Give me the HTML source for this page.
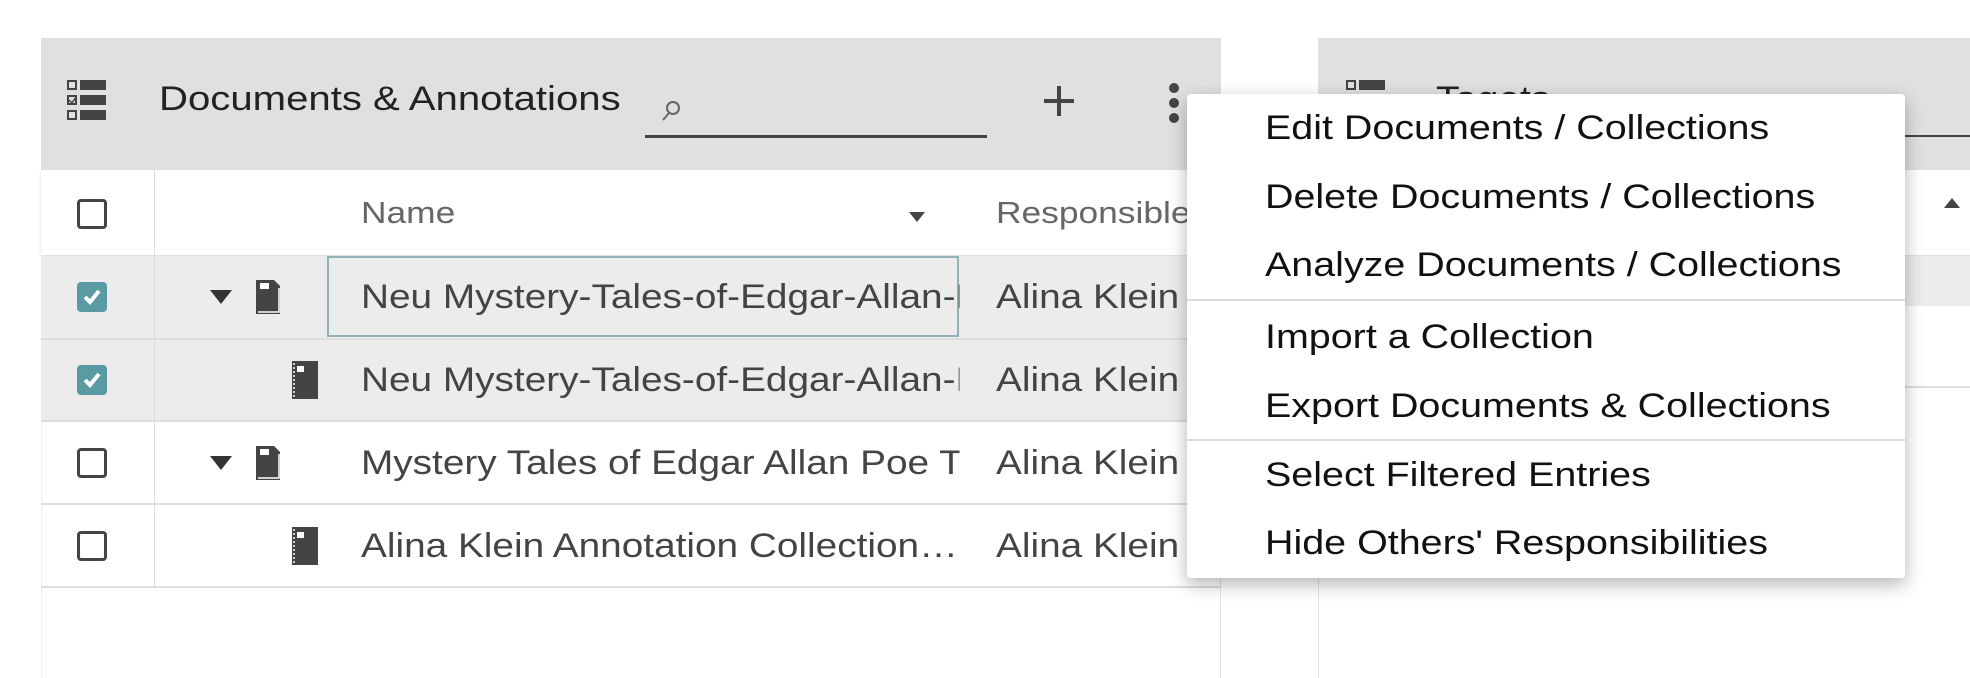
<!DOCTYPE html>
<html><head><meta charset="utf-8"><style>
*{margin:0;padding:0;box-sizing:border-box}
body{width:1970px;height:656px;background:#fff;position:relative;overflow:hidden;font-family:"Liberation Sans",sans-serif}
.a{position:absolute}
.t{position:absolute;white-space:nowrap;font-size:34px;color:#444;line-height:40px;transform:scaleX(1.14);transform-origin:0 0}
.cb{position:absolute;width:30px;height:30px;border:3px solid #444;border-radius:4px;background:#fff}
.cbc{position:absolute;width:30px;height:30px;border-radius:4px;background:#5a9aa3}
.mi{position:absolute;left:78px;font-size:34px;color:#111;white-space:nowrap;line-height:40px;transform:scaleX(1.16);transform-origin:0 0}
</style></head><body>
<div class="a" style="left:41px;top:38px;width:1180px;height:640px;border-right:1px solid #e4e4e4;border-left:1px solid #eee"></div>
<div class="a" style="left:41px;top:38px;width:1180px;height:132px;background:#e0e0e0"></div>
<svg class="a" style="left:67px;top:80px" width="42" height="42" viewBox="0 0 42 42">
<rect x="1" y="1" width="8" height="8" fill="none" stroke="#444" stroke-width="2"/><rect x="13" y="0" width="26" height="10" fill="#444"/>
<rect x="1" y="16" width="8" height="8" fill="none" stroke="#444" stroke-width="2"/><path d="M2 20l3 3 4-6" stroke="#444" stroke-width="1.5" fill="none"/><rect x="13" y="15" width="26" height="10" fill="#444"/>
<rect x="1" y="31" width="8" height="8" fill="none" stroke="#444" stroke-width="2"/><rect x="13" y="30" width="26" height="10" fill="#444"/>
</svg>
<div class="t" style="left:159px;top:79px;color:#222;transform:scaleX(1.18)">Documents &amp; Annotations</div>
<svg class="a" style="left:660px;top:98px" width="22" height="26" viewBox="0 0 22 26"><circle cx="13" cy="10" r="6" fill="none" stroke="#666" stroke-width="2"/><path d="M9 15l-6 7" stroke="#666" stroke-width="2"/></svg>
<div class="a" style="left:645px;top:135px;width:342px;height:3px;background:#444"></div>
<div class="a" style="left:1044px;top:99px;width:30px;height:4px;background:#444"></div>
<div class="a" style="left:1057px;top:86px;width:4px;height:30px;background:#444"></div>
<div class="a" style="left:1169px;top:83px;width:10px;height:10px;border-radius:5px;background:#444"></div>
<div class="a" style="left:1169px;top:98px;width:10px;height:10px;border-radius:5px;background:#444"></div>
<div class="a" style="left:1169px;top:113px;width:10px;height:10px;border-radius:5px;background:#444"></div>
<div class="a" style="left:41px;top:170px;width:1180px;height:85px;background:#fff;box-shadow:0 2px 3px rgba(0,0,0,.15)"></div>
<div class="a" style="left:154px;top:170px;width:1px;height:418px;background:#ddd"></div>
<div class="cb" style="left:77px;top:199px"></div>
<div class="t" style="left:361px;top:193px;color:#666;font-size:31px">Name</div>
<svg class="a" style="left:909px;top:212px" width="16" height="10"><path d="M0 0h16L8 10z" fill="#444"/></svg>
<div class="t" style="left:996px;top:193px;color:#666;font-size:31px">Responsible</div>
<div class="a" style="left:41px;top:256px;width:1180px;height:165px;background:#ececec"></div>
<div class="a" style="left:41px;top:338px;width:1180px;height:2px;background:#ddd"></div>
<div class="a" style="left:41px;top:420px;width:1180px;height:2px;background:#ddd"></div>
<div class="a" style="left:41px;top:503px;width:1180px;height:2px;background:#ddd"></div>
<div class="a" style="left:41px;top:586px;width:1180px;height:2px;background:#ddd"></div>
<div class="a" style="left:154px;top:256px;width:1px;height:332px;background:#ddd"></div>
<div class="a" style="left:327px;top:256px;width:632px;height:81px;border:2px solid #8fb3b8"></div>
<div class="cbc" style="left:77px;top:282px"></div><svg class="a" style="left:77px;top:282px" width="30" height="30"><path d="M8 15l5 5 9-11" stroke="#fff" stroke-width="4" fill="none"/></svg>
<div class="cbc" style="left:77px;top:365px"></div><svg class="a" style="left:77px;top:365px" width="30" height="30"><path d="M8 15l5 5 9-11" stroke="#fff" stroke-width="4" fill="none"/></svg>
<div class="cb" style="left:77px;top:448px"></div>
<div class="cb" style="left:77px;top:531px"></div>
<svg class="a" style="left:210px;top:290px" width="22" height="14"><path d="M0 0h22L11 14z" fill="#333"/></svg>
<svg class="a" style="left:210px;top:456px" width="22" height="14"><path d="M0 0h22L11 14z" fill="#333"/></svg>
<svg class="a" style="left:254px;top:278px" width="30" height="38" viewBox="0 0 30 38"><path d="M2 2h18l6 6v28H2z" fill="#444"/><rect x="6" y="5" width="9" height="6" fill="#fff"/><path d="M4 34h21V10" stroke="#fff" stroke-width="1.5" fill="none"/></svg>
<svg class="a" style="left:254px;top:444px" width="30" height="38" viewBox="0 0 30 38"><path d="M2 2h18l6 6v28H2z" fill="#444"/><rect x="6" y="5" width="9" height="6" fill="#fff"/><path d="M4 34h21V10" stroke="#fff" stroke-width="1.5" fill="none"/></svg>
<svg class="a" style="left:290px;top:360px" width="30" height="40" viewBox="0 0 30 40"><rect x="2" y="1" width="26" height="38" fill="#444"/><rect x="7" y="6" width="7" height="6" fill="#fff"/><path d="M4 3v34" stroke="#fff" stroke-width="1.5" stroke-dasharray="2 2"/></svg>
<svg class="a" style="left:290px;top:526px" width="30" height="40" viewBox="0 0 30 40"><rect x="2" y="1" width="26" height="38" fill="#444"/><rect x="7" y="6" width="7" height="6" fill="#fff"/><path d="M4 3v34" stroke="#fff" stroke-width="1.5" stroke-dasharray="2 2"/></svg>
<div class="t" style="left:361px;top:277px;width:525px;overflow:hidden">Neu Mystery-Tales-of-Edgar-Allan-Poe</div>
<div class="t" style="left:361px;top:360px;width:525px;overflow:hidden">Neu Mystery-Tales-of-Edgar-Allan-Poe</div>
<div class="t" style="left:361px;top:443px;width:525px;overflow:hidden">Mystery Tales of Edgar Allan Poe T</div>
<div class="t" style="left:361px;top:526px;width:530px;overflow:hidden">Alina Klein Annotation Collection…</div>
<div class="t" style="left:996px;top:277px;width:186px;overflow:hidden">Alina Klein</div>
<div class="t" style="left:996px;top:360px;width:186px;overflow:hidden">Alina Klein</div>
<div class="t" style="left:996px;top:443px;width:186px;overflow:hidden">Alina Klein</div>
<div class="t" style="left:996px;top:526px;width:186px;overflow:hidden">Alina Klein</div>
<div class="a" style="left:1318px;top:38px;width:700px;height:640px;border-left:1px solid #e4e4e4"></div>
<div class="a" style="left:1318px;top:38px;width:700px;height:132px;background:#e0e0e0"></div>
<svg class="a" style="left:1346px;top:80px" width="40" height="12"><rect x="1" y="1" width="8" height="8" fill="none" stroke="#444" stroke-width="2"/><rect x="13" y="0" width="26" height="10" fill="#444"/></svg>
<div class="t" style="left:1436px;top:79px;color:#222">Tagets</div>
<div class="a" style="left:1900px;top:135px;width:80px;height:2px;background:#444"></div>
<div class="a" style="left:1318px;top:170px;width:700px;height:85px;background:#fff;box-shadow:0 2px 3px rgba(0,0,0,.15)"></div>
<svg class="a" style="left:1944px;top:198px" width="16" height="10"><path d="M0 10h16L8 0z" fill="#444"/></svg>
<div class="a" style="left:1318px;top:256px;width:700px;height:50px;background:#ececec"></div>
<div class="a" style="left:1318px;top:386px;width:700px;height:2px;background:#ddd"></div>
<div class="a" style="left:1187px;top:94px;width:718px;height:484px;background:#fff;border-radius:4px;box-shadow:0 6px 18px rgba(0,0,0,.3)">
<div class="mi" style="top:14px">Edit Documents / Collections</div>
<div class="mi" style="top:83px">Delete Documents / Collections</div>
<div class="mi" style="top:151px">Analyze Documents / Collections</div>
<div class="a" style="left:0;top:205px;width:718px;height:2px;background:#ddd"></div>
<div class="mi" style="top:223px">Import a Collection</div>
<div class="mi" style="top:292px">Export Documents &amp; Collections</div>
<div class="a" style="left:0;top:345px;width:718px;height:2px;background:#ddd"></div>
<div class="mi" style="top:361px">Select Filtered Entries</div>
<div class="mi" style="top:429px">Hide Others' Responsibilities</div>
</div>
</body></html>
